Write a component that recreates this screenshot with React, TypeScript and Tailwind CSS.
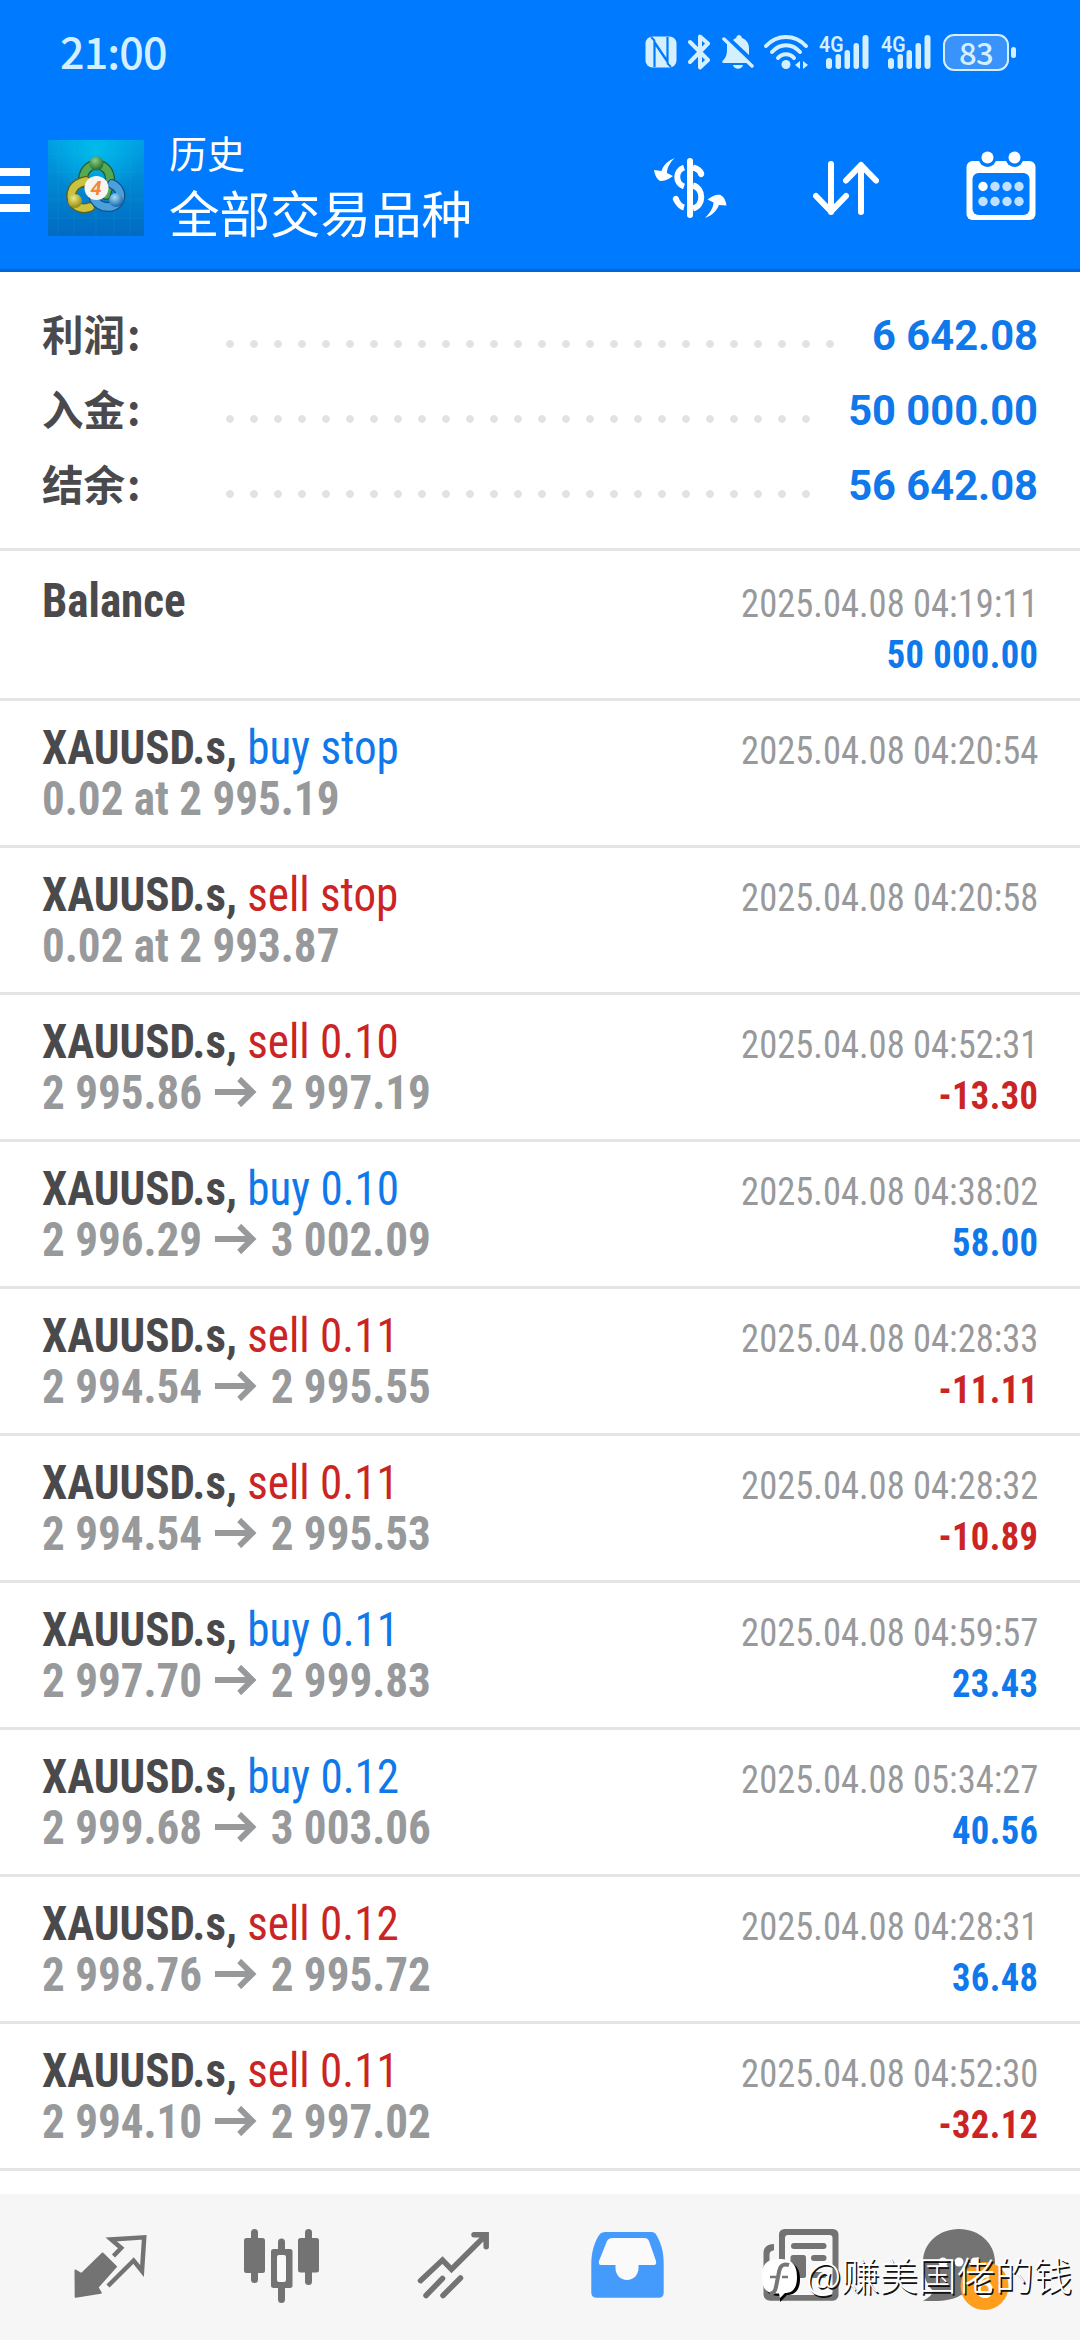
import React from 'react';

type Side = 'buy' | 'sell';

interface HistoryItem {
    symbol: string;
    side?: Side;
    label?: string;
    detail?: string;
    from?: string;
    to?: string;
    time: string;
    amount?: string;
}

interface SummaryItem {
    label: string;
    value: string;
    leaderClass: string;
}

const summary: SummaryItem[] = [
    { label: '利润', value: '6 642.08', leaderClass: 'w-[624px]' },
    { label: '入金', value: '50 000.00', leaderClass: 'w-[600px]' },
    { label: '结余', value: '56 642.08', leaderClass: 'w-[600px]' },
];

const history: HistoryItem[] = [
    { symbol: 'Balance', time: '2025.04.08 04:19:11', amount: '50 000.00' },
    { symbol: 'XAUUSD.s', side: 'buy', label: 'buy stop', detail: '0.02 at 2 995.19', time: '2025.04.08 04:20:54' },
    { symbol: 'XAUUSD.s', side: 'sell', label: 'sell stop', detail: '0.02 at 2 993.87', time: '2025.04.08 04:20:58' },
    { symbol: 'XAUUSD.s', side: 'sell', label: 'sell 0.10', from: '2 995.86', to: '2 997.19', time: '2025.04.08 04:52:31', amount: '-13.30' },
    { symbol: 'XAUUSD.s', side: 'buy', label: 'buy 0.10', from: '2 996.29', to: '3 002.09', time: '2025.04.08 04:38:02', amount: '58.00' },
    { symbol: 'XAUUSD.s', side: 'sell', label: 'sell 0.11', from: '2 994.54', to: '2 995.55', time: '2025.04.08 04:28:33', amount: '-11.11' },
    { symbol: 'XAUUSD.s', side: 'sell', label: 'sell 0.11', from: '2 994.54', to: '2 995.53', time: '2025.04.08 04:28:32', amount: '-10.89' },
    { symbol: 'XAUUSD.s', side: 'buy', label: 'buy 0.11', from: '2 997.70', to: '2 999.83', time: '2025.04.08 04:59:57', amount: '23.43' },
    { symbol: 'XAUUSD.s', side: 'buy', label: 'buy 0.12', from: '2 999.68', to: '3 003.06', time: '2025.04.08 05:34:27', amount: '40.56' },
    { symbol: 'XAUUSD.s', side: 'sell', label: 'sell 0.12', from: '2 998.76', to: '2 995.72', time: '2025.04.08 04:28:31', amount: '36.48' },
    { symbol: 'XAUUSD.s', side: 'sell', label: 'sell 0.11', from: '2 994.10', to: '2 997.02', time: '2025.04.08 04:52:30', amount: '-32.12' },
];

function SignalIcon({ className }: { className: string }) {
    return (
        <svg viewBox="0 0 50 36" className={className} fill="currentColor">
            <text x="0" y="17.500" fontSize="22" fontWeight="600" fontFamily="Roboto, sans-serif" textLength="24.500" lengthAdjust="spacingAndGlyphs">4G</text>
            <rect x="7" y="24" width="6" height="11" rx="3" />
            <rect x="16.500" y="20" width="5.500" height="15" rx="2.700" />
            <rect x="25.500" y="16" width="5.500" height="19" rx="2.700" />
            <rect x="34.500" y="9" width="5.500" height="26" rx="2.700" />
            <rect x="43.500" y="1" width="6" height="34" rx="3" />
        </svg>
    );
}

function StatusBar() {
    return (
        <div className="h-[108px] flex items-center justify-between pl-[60px] pr-[64px] text-[#d4f0ff] font-['Noto_Sans_CJK_SC',sans-serif]">
            <span className="mt-[-8px] text-[43px] leading-[64px] font-medium tracking-[-0.02em]">21:00</span>
            <div className="flex items-center mt-[-4px]">
                <svg viewBox="0 0 32 32" className="w-8 h-8" fill="none">
                    <rect x="0.5" y="0.5" width="31" height="31" rx="7" fill="currentColor" />
                    <path d="M9.500 31V6l13.500 20M22.500 1v25L9 6" stroke="#007aff" strokeWidth="2.200" />
                    <path d="M6 1l4 4M26 31l-4-4" stroke="#007aff" strokeWidth="1.800" />
                </svg>
                <svg viewBox="0 0 24 36" className="ml-[11px] w-6 h-9" fill="none" stroke="currentColor" strokeWidth="4" strokeLinecap="round" strokeLinejoin="round">
                    <path d="M2 8l18 18-8 7.500V2.500l8 7L2 28" />
                </svg>
                <svg viewBox="0 0 32 36" className="ml-[10px] w-8 h-9" fill="currentColor">
                    <path d="M5 9L27 29H1c-1 0-1-2 0-2.500 3-3 4-6 4-11.500z" />
                    <path d="M11 6c1-1 2-1.500 3-2 1-4 5-4 6 0 5 2 7 6 7 10v7z" />
                    <path d="M2 5l28 27" stroke="currentColor" strokeWidth="3.500" strokeLinecap="round" />
                    <path d="M11 31h10c-1 5-9 5-10 0z" />
                </svg>
                <svg viewBox="0 0 46 36" className="ml-[9px] w-[46px] h-9" fill="none" stroke="currentColor" strokeWidth="4" strokeLinecap="round">
                    <path d="M3 12c11-12 29-12 40 0M9 18c8-9 20-9 28 0M15 24c4-5 12-5 16 0" />
                    <circle cx="23" cy="30.500" r="4.500" fill="currentColor" stroke="none" />
                    <path d="M32 31l5-4v8zM45 31l-5-4v8z" fill="currentColor" stroke="none" />
                </svg>
                <SignalIcon className="ml-[10px] w-[50px] h-9 overflow-visible" />
                <SignalIcon className="ml-3 w-[50px] h-9 overflow-visible" />
                <div className="ml-3 w-[66px] h-[37px] rounded-[11px] border-[2.5px] border-current bg-[#3a92fb] flex items-center justify-center">
                    <span className="mt-[-2px] text-[31px] leading-none font-medium tracking-[-0.02em]">83</span>
                </div>
                <div className="ml-[2px] w-[5px] h-[11px] rounded-sm bg-current"></div>
            </div>
        </div>
    );
}

function AppLogo() {
    return (
        <svg viewBox="0 0 96 96" className="w-24 h-24">
            <defs>
                <linearGradient id="tile" x1="0" y1="0" x2="0" y2="1">
                    <stop offset="0" stopColor="#009fe4" />
                    <stop offset="0.5" stopColor="#0085d0" />
                    <stop offset="1" stopColor="#006ac2" />
                </linearGradient>
                <radialGradient id="glow" cx="0.5" cy="0.1" r="0.5">
                    <stop offset="0" stopColor="#00c4ee" stopOpacity="0.8" />
                    <stop offset="1" stopColor="#00c4ee" stopOpacity="0" />
                </radialGradient>
                <radialGradient id="greenBall" cx="0.4" cy="0.3" r="0.7">
                    <stop offset="0" stopColor="#8fce80" />
                    <stop offset="1" stopColor="#1d6e2b" />
                </radialGradient>
                <radialGradient id="yellowBall" cx="0.4" cy="0.3" r="0.7">
                    <stop offset="0" stopColor="#f1ea83" />
                    <stop offset="1" stopColor="#92890f" />
                </radialGradient>
                <radialGradient id="blueBall" cx="0.4" cy="0.3" r="0.7">
                    <stop offset="0" stopColor="#a6dcfa" />
                    <stop offset="1" stopColor="#1767ab" />
                </radialGradient>
            </defs>
            <rect width="96" height="96" fill="url(#tile)" />
            <rect width="96" height="96" fill="url(#glow)" />
            <path d="M10 0v96M26 0v96M48 0v96M66 0v96M82 0v96M0 14h96M0 32h96M0 60h96M0 78h96" stroke="#3fc0ee" strokeOpacity="0.1" />
            <g fill="none" strokeLinecap="round">
                <path d="M35 43c-2-24 28-24 27-2l-4 14" stroke="#1b5d31" strokeWidth="10" />
                <path d="M35 43c-2-24 28-24 27-2l-4 14" stroke="#56a853" strokeWidth="7.500" />
                <path d="M42 67c-13 5-23-7-17-18 3-5 8-7 13-8" stroke="#5d6218" strokeWidth="10" />
                <path d="M42 67c-13 5-23-7-17-18 3-5 8-7 13-8" stroke="#cbc340" strokeWidth="7.500" />
                <path d="M64 44c13 6 10 23-4 23-7 0-11-3-14-8" stroke="#114e82" strokeWidth="10" />
                <path d="M64 44c13 6 10 23-4 23-7 0-11-3-14-8" stroke="#4aa0dc" strokeWidth="7.500" />
            </g>
            <circle cx="48.500" cy="23.500" r="7" fill="url(#greenBall)" />
            <circle cx="27" cy="61" r="7" fill="url(#yellowBall)" />
            <circle cx="68" cy="60" r="7" fill="url(#blueBall)" />
            <circle cx="48.500" cy="48" r="12" fill="#f7f5f2" />
            <text x="48" y="55" textAnchor="middle" fontSize="20" fontStyle="italic" fontWeight="700" fill="#f08a35" fontFamily="Roboto, sans-serif">4</text>
        </svg>
    );
}

function TitleBar() {
    return (
        <div className="h-[164px] flex items-start border-b-[3px] border-[#0068d6]">
            <div className="mt-[60px] w-[30px] flex flex-col gap-[10px]">
                <div className="h-2 bg-white"></div>
                <div className="h-2 bg-white"></div>
                <div className="h-2 bg-white"></div>
            </div>
            <div className="ml-[18px] mt-8">
                <AppLogo />
            </div>
            <div className="ml-[25px] mt-[21px] w-[460px] text-white font-['Noto_Sans_CJK_SC',sans-serif]">
                <div className="text-[38px] leading-[46px]">历史</div>
                <div className="mt-[4px] text-[50.5px] leading-[64px]">全部交易品种</div>
            </div>
            <svg viewBox="0 0 80 80" className="ml-[20px] mt-10 w-20 h-20" fill="none" stroke="white">
                <path d="M41 13v54" strokeWidth="6" strokeLinecap="round" />
                <path d="M35 19.500c-9 3-9 16 0 19M44 19.500c4 1 7 3 8.500 6.500M44 37.500c11 3 11 20 0 23M35 59.500c-4-1-6-4-8-8" strokeWidth="6" strokeLinecap="butt" />
                <path d="M52 26l.1.100M27 51l-.1-.100" strokeWidth="6" strokeLinecap="round" />
                <path d="M26 10c-8 3-12 8-13.500 13L5 22c1 6 3 9 6 11 4 0 8-1 13-5l-6-3c0-5 3-11 8-15z" fill="white" stroke="none" />
                <path d="M56 70c8-3 12-8 14-13l7.500 .500c-1-6-3-9-6-10.500-4-1-8 1-13 4.500l6 3c0 5-4 11-8.500 15.500z" fill="white" stroke="none" />
            </svg>
            <svg viewBox="0 0 66 54" className="ml-[84px] mt-[53px] w-[66px] h-[54px]" fill="none" stroke="white" strokeWidth="6" strokeLinecap="round" strokeLinejoin="round">
                <path d="M18 3v48M3 35l15 15.500L33 35" />
                <path d="M48 51V4M33 19.500L48 4l15 15.500" />
            </svg>
            <svg viewBox="0 0 70 70" className="ml-[87px] mt-[43px] w-[70px] h-[70px]">
                <rect x="0.500" y="10" width="69" height="59" rx="6" fill="white" />
                <circle cx="21.500" cy="7" r="9" fill="#007aff" />
                <circle cx="48.500" cy="7" r="9" fill="#007aff" />
                <circle cx="21.500" cy="6.500" r="6" fill="white" />
                <circle cx="48.500" cy="6.500" r="6" fill="white" />
                <rect x="6.500" y="22" width="57" height="42" rx="6" fill="#007aff" />
                <g fill="#bfe0ff">
                    <circle cx="17" cy="35.500" r="4.700" fill="white" />
                    <circle cx="29" cy="35.500" r="4.700" />
                    <circle cx="41" cy="35.500" r="4.700" />
                    <circle cx="53" cy="35.500" r="4.700" />
                    <circle cx="17" cy="50.500" r="4.700" />
                    <circle cx="29" cy="50.500" r="4.700" />
                    <circle cx="41" cy="50.500" r="4.700" />
                    <circle cx="53" cy="50.500" r="4.700" />
                </g>
            </svg>
        </div>
    );
}

function Summary() {
    return (
        <section className="h-[279px] pt-[26px] px-[42px] border-b-[3px] border-[#e4e4e4]">
            {summary.map((item) => (
                <div key={item.label} className="h-[75px] flex items-center justify-between font-bold">
                    <div className="mt-[-5px] w-[176px] flex gap-[3px] text-[41.5px] text-[#4a4a4c] font-['Noto_Sans_CJK_SC',sans-serif]">
                        <span>{item.label}</span>
                        <span className="ml-[-1px] mt-[-1px]">:</span>
                    </div>
                    <div className="flex-1">
                        <div className={`${item.leaderClass} mt-[16px] h-2 bg-[radial-gradient(circle_at_center,#e2e2e2_3.5px,transparent_4.2px)] bg-[length:24px_8px]`}></div>
                    </div>
                    <span className="mt-[2px] text-[41.7px] text-[#0f78ea]">{item.value}</span>
                </div>
            ))}
        </section>
    );
}

function PriceArrow() {
    return (
        <svg viewBox="0 0 45 30" className="ml-[13px] mr-[15px] mb-[2px] inline-block align-baseline w-[45px] h-[30px]" fill="none" stroke="currentColor" strokeWidth="6">
            <path d="M0 15h40M26 2l14 13-14 13" />
        </svg>
    );
}

function HistoryRow({ item }: { item: HistoryItem }) {
    const sideColor = item.side === 'sell' ? 'text-[#cb2424]' : 'text-[#0f78ea]';
    const amountColor = item.amount?.startsWith('-') ? 'text-[#cb2424]' : 'text-[#0f78ea]';

    return (
        <div className="h-[147px] first:h-[150px] first:pt-6 flex justify-between pt-[21px] px-[42px] border-b-[3px] border-[#e4e4e4] font-stretch-condensed">
            <div className="origin-left scale-x-[0.939] text-[48px] leading-[51px] whitespace-nowrap">
                <div>
                    <span className="font-bold text-[#4a4a4c]">{item.symbol}{item.label && ', '}</span>
                    {item.label && <span className={sideColor}>{item.label}</span>}
                </div>
                <div className="font-bold text-[#98999b]">
                    {item.detail}
                    {item.from && (
                        <>
                            {item.from}
                            <PriceArrow />
                            {item.to}
                        </>
                    )}
                </div>
            </div>
            <div className="pt-[3px] origin-right scale-x-[0.925] text-[39.5px] leading-[51px] text-right whitespace-nowrap">
                <div className="text-[#98999b]">{item.time}</div>
                {item.amount && <div className={`font-bold tracking-[0.01em] ${amountColor}`}>{item.amount}</div>}
            </div>
        </div>
    );
}

function BottomNav() {
    return (
        <nav className="relative h-[146px] bg-[#f6f6f6] flex items-start pt-[31px] pl-[70px] text-[#737373]">
            <svg viewBox="70 75 80 80" className="w-20 h-20">
                <path d="M75.500 120.500L81.600 124l21-20.500L116 116.700 97.500 137.300l3.200 5.500-25 4z" fill="currentColor" stroke="currentColor" strokeWidth="2" strokeLinejoin="round" />
                <path d="M113.500 106L121.200 98l-10-8.500 33-2.200L142 121l-8.400-10.500L108 136" fill="none" stroke="currentColor" strokeWidth="4.500" />
            </svg>
            <svg viewBox="241 75 80 80" className="ml-[91px] w-20 h-20" fill="currentColor">
                <rect x="251" y="79" width="7" height="54" rx="3.500" />
                <rect x="244" y="88" width="21" height="35" rx="2.500" />
                <rect x="278" y="88.500" width="7" height="64.500" rx="3.500" />
                <rect x="271" y="99" width="21.500" height="39" rx="2.500" />
                <rect x="277" y="105" width="9" height="27" rx="2" fill="#fafafa" />
                <rect x="305" y="79" width="7" height="56" rx="3.500" />
                <rect x="298" y="88" width="21" height="34.500" rx="2.500" />
            </svg>
            <svg viewBox="414 75 80 80" className="ml-[93px] w-20 h-20" fill="none" stroke="currentColor" strokeWidth="5.500" strokeLinecap="round" strokeLinejoin="miter">
                <path d="M420.500 130.700l22-20.700 9 9.300L486 85M474 84.700h12.200v12" />
                <path d="M426 145.500l16.500-17M443 145.500l17.500-17.500" />
            </svg>
            <svg viewBox="587 75 80 80" className="ml-[94px] w-20 h-20">
                <path d="M604 82h46c4 0 5 2 7 6 4 8 5.700 16 5.700 26v29c0 3-2 4.700-4.700 4.700h-63c-3 0-4.700-2-4.700-4.700v-29c0-10 2-18 6-26 2-4 4-6 7.700-6z" fill="#459bfb" />
                <path d="M612 88h31c3 0 4 1 5 3l7 20c.500 2 0 4-2 4h-15.500v3c0 7-5 12-11.500 12s-11.500-5-11.500-12v-3H600c-2 0-2.500-2-2-4l8-20c1-2 3-3 6-3z" fill="#fafafa" />
            </svg>
            <svg viewBox="760 75 80 80" className="ml-[93px] w-20 h-20" fill="currentColor">
                <path d="M773 94c-6 0-10.500 3-10.500 9v41c0 4 3 6.700 7 6.700h14v-8h-15v-38c0-3 2-4 4.500-4.500z" />
                <rect x="778" y="79" width="59.500" height="71.700" rx="5.500" />
                <rect x="784" y="85" width="47.500" height="60" rx="3" fill="#f8f8f8" />
                <rect x="790" y="93" width="35.500" height="6" rx="3" />
                <rect x="789.500" y="105" width="15.500" height="23" rx="2.500" />
                <rect x="810" y="105" width="15.500" height="6" rx="3" />
                <rect x="810" y="122" width="15.500" height="6" rx="3" />
            </svg>
            <svg viewBox="920 75 92 88" className="ml-[80px] w-[92px] h-[88px]">
                <path d="M958 79c20 0 36 14 36 33s-13 33-34 33c-8 5-20 7-38 5.700 6-3 9-6 10-10-6-6-10-14-10-28.700C922 93 938 79 958 79z" fill="currentColor" />
                <circle cx="942" cy="112" r="4.500" fill="white" />
                <circle cx="958" cy="112" r="4.500" fill="white" />
                <circle cx="974" cy="112" r="4.500" fill="white" />
                <circle cx="983.500" cy="136" r="24" fill="#ff9d1c" />
                <text x="983.500" y="148" textAnchor="middle" fontSize="34" fontWeight="500" fill="white">6</text>
            </svg>
            {/* author mark lying over the tab icons */}
            <div className="absolute left-[761px] top-[54px] flex items-start">
                <svg viewBox="0 0 40 46" className="mt-[9px] w-10 h-[46px]">
                    <path d="M20 4c14 0 19 7 19 18 0 12-6 16-13 16l-7 7V39C6 39 3 33 3 21S8 4 20 4z" fill="black" />
                    <path d="M18 2c14 0 18 7 18 18 0 12-5 16-12 16l-5 5-1-4.500C4 37 1 31 1 19S6 2 18 2z" fill="white" />
                    <path d="M28 8c-6-2-9 1-10 7l-3 15c-1 5-3 7-6 6" fill="none" stroke="#777" strokeWidth="4" />
                    <path d="M9 20h6M21 20h6" stroke="#777" strokeWidth="2.500" />
                </svg>
                <span className="ml-[5px] text-[38.5px] leading-[50px] font-light text-white whitespace-nowrap [text-shadow:1.5px_1.5px_0_#111] font-['Noto_Sans_CJK_SC',sans-serif]">@赚美国佬的钱</span>
            </div>
        </nav>
    );
}

export default function App() {
    return (
        <div className="w-[1080px] h-[2340px] flex flex-col bg-white overflow-hidden font-[Roboto,'Noto_Sans_CJK_SC',sans-serif]">
            <header className="bg-[#007aff]">
                <StatusBar />
                <TitleBar />
            </header>
            <Summary />
            <main className="flex-1">
                {history.map((item) => (
                    <HistoryRow key={item.symbol + item.label + item.time} item={item} />
                ))}
            </main>
            <BottomNav />
        </div>
    );
}
